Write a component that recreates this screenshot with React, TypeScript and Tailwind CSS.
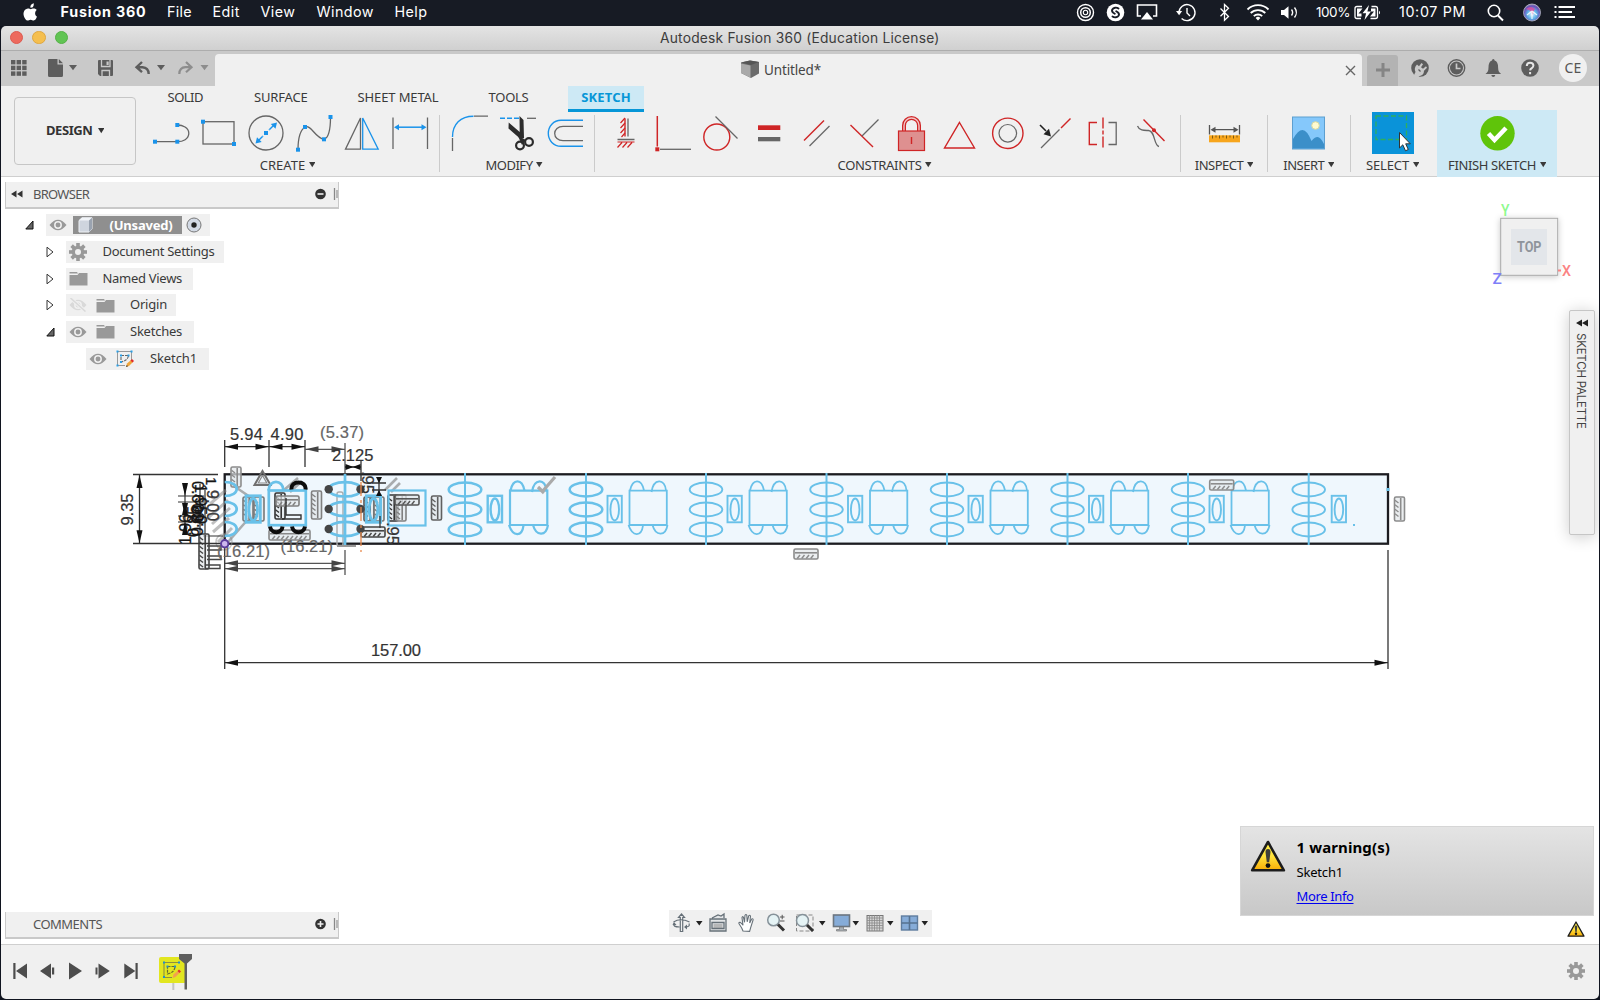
import React, { useLayoutEffect, useRef } from "react";

type Kids = { children?: React.ReactNode };

/* Text whose tracking is adjusted so that it takes exactly w pixels. */
function Fit({ w, className = "", children }: { w: number; className?: string; children: string }) {
  const ref = useRef<HTMLSpanElement>(null);
  useLayoutEffect(() => {
    const el = ref.current;
    if (!el) return;
    el.style.letterSpacing = "0px";
    const natural = el.getBoundingClientRect().width;
    el.style.letterSpacing = (w - natural) / children.length + "px";
  }, [w, children]);
  return (
    <span ref={ref} className={"inline-block shrink-0 whitespace-pre " + className}>
      {children}
    </span>
  );
}

/* A drawing that shows the part x..x+w, y..y+h of the window's coordinate space. */
function Art({ x, y, w, h, className = "", children }: { x: number; y: number; w: number; h: number; className?: string } & Kids) {
  return (
    <svg className={"block shrink-0 " + className} width={w} height={h} viewBox={`${x} ${y} ${w} ${h}`} fill="none">
      {children}
    </svg>
  );
}

const G = "#666";
const B = "#1a93ea";
const R = "#cf2526";

function Dot({ x, y, c = B }: { x: number; y: number; c?: string }) {
  return <rect x={x - 2} y={y - 2} width={4} height={4} fill={c} />;
}

function Caret({ className = "" }: { className?: string }) {
  return (
    <svg className={"block shrink-0 " + className} width="6.5" height="5.5" viewBox="0 0 7 6">
      <path d="M0 0H7L3.5 5.6Z" fill="currentColor" />
    </svg>
  );
}

/* ---------- macOS menu bar ---------- */

function MenuBar() {
  return (
    <div className="flex h-[26px] items-center bg-[#171b24] pb-[2px] font-['Inter',sans-serif] text-[14.3px] text-white">
      <Art x={18} y={0} w={42.5} h={25} className="ml-[18px]">
        <path d="M36.6 13.2c0-2 1.3-3 1.7-3.3-1-1.4-2.4-1.6-3-1.6-1.300-.1-2.400.7-3 .7-.7 0-1.700-.7-2.700-.7-3 .1-5.600 3.300-4.100 8 .8 2.200 2 4 3.500 4 1.200 0 1.700-.8 3.100-.8s1.900.8 3.100.8c1.600 0 2.800-2.300 3.300-4-.9-.4-1.900-1.500-1.900-3.100zM34.300 7c.9-1.100 1-2.500 1-4-1.700.2-3.600 1.700-3.500 4.400.9.100 1.900-.1 2.500-.4z" transform="translate(-1.500 .2)" fill="#fff" />
      </Art>
      <Fit w={86} className="font-bold">Fusion 360</Fit>
      <Fit w={25} className="ml-[20.5px]">File</Fit>
      <Fit w={27.5} className="ml-[20.5px]">Edit</Fit>
      <Fit w={35} className="ml-[20.5px]">View</Fit>
      <Fit w={57.5} className="ml-[21px]">Window</Fit>
      <Fit w={33} className="ml-[20.5px]">Help</Fit>
      <div className="ml-auto flex items-center">
        <Art x={1071} y={0} w={244} h={25}>
          <circle cx="1085.5" cy="12.5" r="8" stroke="#fff" strokeWidth="1.4" />
          <circle cx="1085.5" cy="12.5" r="4.800" stroke="#fff" strokeWidth="1.5" />
          <circle cx="1085.5" cy="12.5" r="2.200" stroke="#fff" strokeWidth="1.100" />
          <circle cx="1115.5" cy="12.5" r="8.800" fill="#fff" />
          <path d="M1118.500 8.500c-2-1.500-5-1-6.200 1-.8 1.500 0 2.500 1 3.300l1.500 1M1112.500 16.500c2 1.500 5 1 6.200-1 .8-1.500 0-2.500-1-3.300l-1.500-1" stroke="#171b24" strokeWidth="1.900" strokeLinecap="round" />
          <path d="M1141 16h-3.500V5h19v11h-3.500" stroke="#fff" strokeWidth="1.6" />
          <path d="M1147 12l6 7.500h-12z" fill="#fff" />
          <path d="M1179 12.500a8 8 0 1 1 2.600 6" stroke="#fff" strokeWidth="1.4" />
          <path d="M1176 11h6.200l-3.100 4.200z" fill="#fff" />
          <path d="M1187 8v5l3 3" stroke="#fff" strokeWidth="1.4" />
          <path d="M1220.500 8.500l8 8-4 3.800V4.500l4 3.800-8 8" stroke="#fff" strokeWidth="1.3" />
          <path d="M1247.500 9.500a15 15 0 0 1 21 0M1250.700 13a10.500 10.500 0 0 1 14.600 0M1253.800 16.200a6 6 0 0 1 8.400 0" stroke="#fff" strokeWidth="1.8" />
          <path d="M1258 20.500l-2.400-2.600a3.500 3.500 0 0 1 4.800 0z" fill="#fff" />
          <path d="M1281 10h3l4.500-3.800v12.600L1284 15h-3z" fill="#fff" />
          <path d="M1291.500 9.500a5 5 0 0 1 0 6M1294.500 7.500a8 8 0 0 1 0 10" stroke="#fff" strokeWidth="1.4" />
        </Art>
        <Fit w={34} className="ml-[1px] text-[13.5px]">100%</Fit>
        <Art x={1350} y={0} w={49} h={25}>
          <path d="M1362 6.500h-5a2 2 0 0 0-2 2v8a2 2 0 0 0 2 2h4M1371.500 6.500h4a2 2 0 0 1 2 2v8a2 2 0 0 1-2 2h-5" stroke="#fff" strokeWidth="1.3" />
          <path d="M1357 8.500h5.500l-4 5h3v3h-4.500zM1375.500 16.500h-5.500l4-5h-3v-3h4.500z" fill="#fff" />
          <path d="M1369 5l-6.500 8.200h3.600l-1.600 6.800 6.500-8.400h-3.600z" fill="#fff" />
          <path d="M1379 10.700v3.600c1.300-.4 1.300-3.200 0-3.600z" fill="#fff" />
        </Art>
        <Fit w={67}>10:07 PM</Fit>
        <Art x={1466} y={0} w={134} h={25}>
          <circle cx="1494" cy="11" r="5.700" stroke="#fff" strokeWidth="1.6" />
          <path d="M1498 15.500l5 5" stroke="#fff" strokeWidth="1.900" />
          <defs>
            <radialGradient id="siri" cx=".5" cy=".6" r=".6">
              <stop offset="0" stopColor="#e9f4ff" /><stop offset=".45" stopColor="#5fb4e8" /><stop offset=".8" stopColor="#6a4fb8" /><stop offset="1" stopColor="#8d8aa8" />
            </radialGradient>
          </defs>
          <circle cx="1532" cy="12.5" r="8.500" fill="url(#siri)" stroke="#b9bccb" strokeWidth=".8" />
          <path d="M1526 9q5-4 9 0q-2 2-2 6q-2-5-7-6z" fill="#e0479a" opacity=".8" />
          <path d="M1532 11l-5 4M1532 11l0 8M1532 11l5 4" stroke="#fff" strokeWidth="1.2" opacity=".85" />
          <path d="M1554.500 7h2M1554.500 12h2M1554.500 17h2M1558.500 7h16.500M1558.500 12h13.500M1558.500 17h16.500" stroke="#fff" strokeWidth="2.200" />
        </Art>
      </div>
    </div>
  );
}

function TitleBar() {
  return (
    <div className="relative flex h-[25px] items-center justify-center rounded-t-[5px] border-b border-[#adadad] bg-gradient-to-b from-[#e4e4e4] to-[#d0d0d0] pt-px font-['Inter',sans-serif] text-[13.8px] text-[#3c3c3c]">
      <div className="absolute left-[9px] top-[5px] flex gap-[9px]">
        <i className="size-[13.4px] rounded-full border border-[#dd5a50] bg-[#ed6a5e]" />
        <i className="size-[13.4px] rounded-full border border-[#dfa740] bg-[#f5bf4f]" />
        <i className="size-[13.4px] rounded-full border border-[#55b147] bg-[#61c454]" />
      </div>
      <Fit w={279.5}>Autodesk Fusion 360 (Education License)</Fit>
    </div>
  );
}

/* ---------- application tab row ---------- */

function DocumentTabs() {
  return (
    <div className="flex h-[35px] items-end bg-[#c9c9c9]">
      <Art x={1} y={54} w={214} h={32}>
        {[0, 1, 2].map((r) => [0, 1, 2].map((c) => (
          <rect key={r + "-" + c} x={11 + c * 5.6} y={60 + r * 5.7} width="4.4" height="4.4" fill="#5d5d5d" />
        )))}
        <path d="M49 59h8.500v5.500h5.500V75.500a1.500 1.500 0 0 1-1.500 1.500H49.500a1.500 1.500 0 0 1-1.500-1.500V60a1 1 0 0 1 1-1zM58.800 59l4.200 4.200h-4.200z" fill="#5d5d5d" />
        <path d="M69 65h8l-4 5.300z" fill="#5d5d5d" />
        <path d="M98 61a1 1 0 0 1 1-1h13a1 1 0 0 1 1 1v14a1 1 0 0 1-1 1h-12l-2-2z" fill="#5d5d5d" />
        <path d="M101.500 60v6.500h8.500V60M102 76v-5.500h7.500V76" stroke="#c9c9c9" strokeWidth="1.3" />
        <path d="M106.500 61.500h2.200v3.500h-2.200z" fill="#c9c9c9" />
        <path d="M142 62l-5.500 5.200 5.500 5M137 67.200h5.500q6 .3 6.200 6.800" stroke="#5d5d5d" strokeWidth="2.4" />
        <path d="M157 65h8l-4 5.300z" fill="#5d5d5d" />
        <path d="M186 62l5.500 5.200-5.500 5M191 67.200h-5.500q-6 .3-6.200 6.800" stroke="#8d8d8d" strokeWidth="2.200" />
        <path d="M200.500 65h8l-4 5.300z" fill="#8d8d8d" />
      </Art>
      <div className="flex h-[32px] w-[1147px] items-center rounded-t-[4px] bg-[#f0f0f0] pl-[524px] font-['Noto_Sans',sans-serif] text-[13.5px] text-[#444]">
        <Art x={739} y={60} w={25} h={22}>
          <path d="M741 63.500l9-2 9 1.500v11.500l-8 4.500-10-5z" fill="#6b6b6b" />
          <path d="M741 64.500l9.500 2v12.200L741 74z" fill="#a9a9a9" />
          <path d="M741 63.500l9-2 9 1.500-8 3z" fill="#555" />
        </Art>
        <Fit w={57}>Untitled*</Fit>
        <Art x={1344} y={64} w={13} h={13} className="ml-auto mr-[5.5px]">
          <path d="M1346 66l9 9M1355 66l-9 9" stroke="#666" strokeWidth="1.4" />
        </Art>
      </div>
      <div className="ml-[5px] flex h-[31px] w-[31px] items-center justify-center rounded-t-[3px] bg-[#b3b3b3] pb-[2px]">
        <Art x={1375} y={62} w={16} h={16}>
          <path d="M1376 70h14M1383 63v14" stroke="#858585" strokeWidth="3" />
        </Art>
      </div>
      <Art x={1398} y={54} w={161} h={32}>
        <circle cx="1420" cy="68" r="8.800" fill="#5d5d5d" />
        <path d="M1413 77l2.500-5q-2-4 1.500-7.500l2 1.800 2.500-3.300 1.500 1.300-2 3 2 1.500 3-2.500 1 1.500-3 3q0 4.500-5 5.500l-1.500 3z" fill="#c9c9c9" />
        <path d="M1418.500 69.500l2 2" stroke="#5d5d5d" strokeWidth="1.2" />
        <circle cx="1456.5" cy="68" r="8.200" stroke="#5d5d5d" strokeWidth="1.4" />
        <circle cx="1456.5" cy="68" r="6.500" fill="#5d5d5d" />
        <path d="M1456.500 63.500v5h4" stroke="#c9c9c9" strokeWidth="1.7" />
        <path d="M1485.500 74q3-2 3-6.500 0-6 3.500-7 0-1.500 1.300-1.500t1.300 1.500q3.500 1 3.500 7 0 4.500 3 6.500zM1491.300 75h4q-.3 2-2 2t-2-2z" fill="#5d5d5d" />
        <circle cx="1530" cy="68" r="8.800" fill="#5d5d5d" />
        <path d="M1526.800 66q0-3.300 3.300-3.300t3.300 2.900q0 1.500-1.600 2.500t-1.700 2.200M1530.100 72v2.200" stroke="#e6e6e6" strokeWidth="2" />
      </Art>
      <div className="mb-[4.5px] flex size-[28px] items-center justify-center rounded-full bg-[#f0f0f0] font-['Noto_Sans',sans-serif] text-[14px] text-[#555]">
        <Fit w={17}>CE</Fit>
      </div>
    </div>
  );
}

/* ---------- ribbon ---------- */

function Group({ label, w, labelW, children, row = "", caption = "" }: { label: string; w: number; labelW: number; row?: string; caption?: string } & Kids) {
  const width = { width: w };
  return (
    <div className="flex h-[67px] shrink-0 flex-col items-center" style={width}>
      <div className={"flex h-[44px] shrink-0 justify-center pt-[2px] " + row}>{children}</div>
      <div className={"flex h-[22px] items-center gap-[3.5px] leading-[22px] " + caption}>
        <Fit w={labelW}>{label}</Fit>
        <Caret />
      </div>
    </div>
  );
}

function Sep() {
  return <div className="mt-[5px] h-[57px] w-px shrink-0 bg-[#cbcbcb]" />;
}

const Icon = ({ x, w = 48, children }: { x: number; w?: number } & Kids) => (
  <Art x={x} y={112} w={w} h={42}>{children}</Art>
);

function CreateIcons() {
  return (
    <>
      <Icon x={148}>
        <path d="M155 141.700H177.500M177.500 125c5 0 11.300 2.500 11.300 8.300s-6 8.400-11.300 8.400" stroke={G} strokeWidth="1.3" />
        <Dot x={155} y={141.7} /><Dot x={177.3} y={141.7} /><Dot x={177.3} y={125} />
      </Icon>
      <Icon x={196} w={46}>
        <rect x="203" y="121.7" width="31" height="22.3" stroke={G} strokeWidth="1.3" />
        <Dot x={203} y={121.7} /><Dot x={234} y={144} />
      </Icon>
      <Icon x={242}>
        <circle cx="266" cy="133" r="17" stroke={G} strokeWidth="1.3" />
        <path d="M258.500 140.500L273.500 125.500" stroke={B} strokeWidth="1.4" />
        <path d="M277 122.500l-1.500 6.200-4.700-4.700zM255.500 143.500l1.500-6.200 4.700 4.700z" fill={B} />
        <rect x="262.5" y="129.5" width="7" height="7" fill="#f0f0f0" />
        <Dot x={266} y={133} />
      </Icon>
      <Icon x={290}>
        <path d="M298 149.700c0-10 1.500-19 7-22.700 6-3 10 11 19 12.300 5-1.500 6.500-12 6.500-22.300" stroke={G} strokeWidth="1.3" />
        <Dot x={298} y={149.7} /><Dot x={305} y={127} /><Dot x={324} y={139.3} /><Dot x={330.5} y={117} />
      </Icon>
      <Icon x={338}>
        <path d="M360.500 118v31.200h-15z" stroke={G} strokeWidth="1.3" />
        <path d="M362.700 118v31.200h15.500z" stroke={B} strokeWidth="1.3" />
      </Icon>
      <Icon x={386}>
        <path d="M393 117.500v31.500M427.500 117.500v31.500" stroke={G} strokeWidth="1.3" />
        <path d="M396 127.200h28" stroke={B} strokeWidth="1.5" />
        <path d="M394 127.200l5-3v6zM426.500 127.200l-5-3v6z" fill={B} />
      </Icon>
    </>
  );
}

function ModifyIcons() {
  return (
    <>
      <Icon x={446}>
        <path d="M452.500 151v-13M474 116.200h14" stroke={G} strokeWidth="1.3" />
        <path d="M452.500 137c0-13 8-20.800 21-20.800" stroke={B} strokeWidth="1.4" />
      </Icon>
      <Icon x={494}>
        <path d="M500 118.300h19" stroke={B} strokeWidth="1.4" strokeDasharray="5 2" />
        <path d="M527 118.300h9" stroke={G} strokeWidth="1.3" />
        <path d="M519.500 116l4 4 .5 18-3.500 1-12-10.500.2-6 11 9.500z" fill="#2c2c2c" />
        <circle cx="520" cy="145.5" r="3.900" stroke="#2c2c2c" strokeWidth="2.200" />
        <circle cx="529" cy="142" r="3.900" stroke="#2c2c2c" strokeWidth="2.200" />
        <path d="M518 136l8 4-4 5z" fill="#2c2c2c" />
      </Icon>
      <Icon x={542} w={47}>
        <path d="M583 120.300h-22c-7.500 0-12.700 6-12.700 13s5.200 13 12.700 13h22" stroke={B} strokeWidth="1.4" />
        <path d="M583 126.300h-20c-5 0-8.300 3.200-8.300 7.200s3.300 7.200 8.300 7.200h20" stroke={G} strokeWidth="1.3" />
      </Icon>
    </>
  );
}

function ConstraintIcons() {
  return (
    <>
      <Icon x={602} w={47}>
        <path d="M625 118.500v18" stroke={R} strokeWidth="1.4" />
        <path d="M628 118.500v18M617.500 139.500h17" stroke={G} strokeWidth="1.3" />
        <path d="M617.500 142h17M625 118l-4.500 5M625 123l-4.500 5M625 128l-4.500 5M625 133l-3.500 4M622 142.500l-4.500 5M627 142.500l-4.500 5M632 142.500l-4.500 5" stroke={R} strokeWidth="1.2" />
      </Icon>
      <Icon x={649}>
        <path d="M657.300 116v30.500" stroke={R} strokeWidth="1.5" />
        <path d="M660 149.300h31" stroke={G} strokeWidth="1.3" />
        <Dot x={657.3} y={149.3} c={R} />
      </Icon>
      <Icon x={697}>
        <circle cx="716.8" cy="137" r="13" stroke={R} strokeWidth="1.4" />
        <path d="M715.500 116.500l22 22" stroke={G} strokeWidth="1.3" />
      </Icon>
      <Icon x={745}>
        <path d="M758 125.300h22.300v4.700H758z" fill={R} />
        <path d="M758 137h22.300v4.300H758z" fill={G} />
      </Icon>
      <Icon x={793}>
        <path d="M804 140.500l20-20" stroke={R} strokeWidth="1.4" />
        <path d="M809.500 146l20-20" stroke={G} strokeWidth="1.3" />
      </Icon>
      <Icon x={841} w={47}>
        <path d="M850.500 125l22.500 22" stroke={R} strokeWidth="1.4" />
        <path d="M862 136l16.500-16.500" stroke={G} strokeWidth="1.3" />
      </Icon>
      <Icon x={888}>
        <path d="M904 131v-5.500a7.500 7.500 0 0 1 15 0v5.500" stroke={R} strokeWidth="4" />
        <path d="M904 131v-5.500a7.500 7.500 0 0 1 15 0v5.500" stroke="#f3c6c6" strokeWidth="1.4" />
        <rect x="898.5" y="131" width="26" height="19.5" fill="#de9090" stroke={R} strokeWidth="1.2" />
        <path d="M911.500 137v7" stroke={R} strokeWidth="1.4" />
      </Icon>
      <Icon x={936}>
        <path d="M959.500 122.500l15 25.500h-30z" stroke={R} strokeWidth="1.4" />
      </Icon>
      <Icon x={984}>
        <circle cx="1007.8" cy="133.3" r="15.2" stroke={R} strokeWidth="1.4" />
        <circle cx="1007.8" cy="133.3" r="8.800" stroke={G} strokeWidth="1.2" />
      </Icon>
      <Icon x={1032}>
        <path d="M1041 148l18.500-18.500" stroke={G} strokeWidth="1.3" />
        <path d="M1061 128l9.500-9.500" stroke={R} strokeWidth="1.5" />
        <path d="M1040 125l6 6" stroke="#222" strokeWidth="1.6" />
        <path d="M1051 136.500l-7.500-2.200 5.500-5.500z" fill="#222" />
      </Icon>
      <Icon x={1080}>
        <path d="M1097 122.500h-7.700v22h7.700" stroke={R} strokeWidth="1.4" />
        <path d="M1108.500 122.500h7.700v22h-7.700" stroke={G} strokeWidth="1.3" />
        <path d="M1103 117.500v31.500" stroke={R} strokeWidth="1.4" strokeDasharray="11 2 4 2" />
      </Icon>
      <Icon x={1128} w={46}>
        <path d="M1137.500 126c2 5 7 4.500 11 4.500 7 .5 5 15 10.500 16" stroke={G} strokeWidth="1.3" />
        <path d="M1143.500 119.500l21 21.500" stroke={R} strokeWidth="1.4" />
        <circle cx="1154" cy="130.3" r="2" fill={R} />
      </Icon>
    </>
  );
}

function Ribbon() {
  return (
    <div className="flex h-[91px] shrink-0 border-b border-[#cfcfcf] bg-[#f0f0f0] font-['Noto_Sans',sans-serif] text-[13px] text-[#3a3a3a]">
      <div className="ml-[13px] mt-[11px] flex h-[67.5px] w-[122px] items-center justify-center gap-[5px] rounded-[4px] border border-[#c6c6c6] text-[13px] font-bold text-[#333]">
        <Fit w={46.5}>DESIGN</Fit>
        <Caret />
      </div>
      <div className="flex w-[1461px] flex-col">
        <div className="flex h-[24px] shrink-0 items-center pl-[31.5px]">
          <Fit w={35.5}>SOLID</Fit>
          <Fit w={53.5} className="ml-[51px]">SURFACE</Fit>
          <Fit w={81} className="ml-[50px]">SHEET METAL</Fit>
          <Fit w={40} className="ml-[50px]">TOOLS</Fit>
          <div className="ml-[39.5px] mt-[1px] flex h-[26px] w-[76px] shrink-0 items-center justify-center border-b-[3px] border-[#0696d7] bg-[#cde9f5] pt-[2px] font-bold text-[#0696d7]">
            <Fit w={49.5}>SKETCH</Fit>
          </div>
        </div>
        <div className="flex h-[67px]">
          <Group label="CREATE" w={303} labelW={45.5} row="pl-[7px]"><CreateIcons /></Group>
          <Sep />
          <Group label="MODIFY" w={154} labelW={47} caption="pr-[6px]"><ModifyIcons /></Group>
          <Sep />
          <Group label="CONSTRAINTS" w={585} labelW={84} caption="pr-[6px]"><ConstraintIcons /></Group>
          <Sep />
          <Group label="INSPECT" w={86} labelW={48.5}>
            <Icon x={1205} w={38}>
              <path d="M1209.500 125v9.500M1239.500 125v9.500M1212 129.700h25" stroke="#555" strokeWidth="1.3" />
              <path d="M1210.500 129.700l5-3v6zM1238.500 129.700l-5-3v6z" fill="#555" />
              <rect x="1209" y="135.3" width="31" height="7" fill="#f7a51c" />
              <path d="M1212.500 135.500v3M1216 135.500v2M1219.500 135.500v3M1223 135.500v2M1226.500 135.500v3M1230 135.500v2M1233.500 135.500v3M1237 135.500v2" stroke="#7d5a10" strokeWidth="1" />
            </Icon>
          </Group>
          <Sep />
          <Group label="INSERT" w={81.5} labelW={41}>
            <Icon x={1290} w={39}>
              <rect x="1293.5" y="117" width="32" height="32" fill="#85c8fb" stroke="#5d9fd0" />
              <path d="M1294 139q5-9 9.500-9t9 11q3-4 6-4t6.500 7v4.500h-31z" fill="#3b8fc9" />
              <circle cx="1316.5" cy="125.5" r="3.800" fill="#fffbd0" stroke="#d8d8a0" />
            </Icon>
          </Group>
          <Sep />
          <Group label="SELECT" w={84} labelW={43}>
            <Icon x={1371} w={42}>
              <rect x="1371" y="112" width="42" height="42" fill="#0a93d9" />
              <rect x="1375" y="116" width="30.5" height="23.5" stroke="#2fae5e" strokeWidth="1.3" strokeDasharray="5 2.5" />
              <path d="M1398.500 132.500v15.500l3.300-3.200 2.700 6 2.800-1.300-2.600-5.700h4.600z" fill="#fff" stroke="#333" strokeWidth="1" />
            </Icon>
          </Group>
          <div className="ml-[2.5px] h-[67px] bg-[#cde9f5]">
            <Group label="FINISH SKETCH" w={120} labelW={88}>
              <Icon x={1476} w={41}>
                <circle cx="1496.5" cy="133.3" r="17.2" fill="#5fc40a" />
                <path d="M1487.500 133.500l6 6.500 11.500-12" stroke="#fff" strokeWidth="4.5" />
              </Icon>
            </Group>
          </div>
        </div>
      </div>
    </div>
  );
}

/* ---------- sketch geometry ---------- */

const SK = "#69c1e9";

function Arrow({ x, y, dir, c = "#111" }: { x: number; y: number; dir: "l" | "r" | "u" | "d"; c?: string }) {
  const rot = { l: 0, u: 90, r: 180, d: 270 }[dir];
  return <path d="M0 0L13 -3V3Z" transform={`translate(${x} ${y}) rotate(${rot})`} fill={c} />;
}

/* Horizontal / vertical constraint glyph: a bar with short teeth below it. */
function Hatch({ x, y, vertical = false, c = "#8c8c8c", len = 24 }: { x: number; y: number; vertical?: boolean; c?: string; len?: number }) {
  const n = Math.floor((len - 3) / 4.5);
  return (
    <g transform={`translate(${x} ${y})` + (vertical ? " rotate(90)" : "")} stroke={c}>
      <rect width={len} height="10" rx="1.5" fill="#e3e7ea" fillOpacity=".7" strokeWidth="1.6" />
      <path d={`M1 3.800H${len - 1}`} strokeWidth="1.6" />
      {Array.from({ length: n }, (_, i) => (
        <path key={i} d={`M${6 + i * 4.5} 6l-2.800 3.500`} strokeWidth="1.400" />
      ))}
    </g>
  );
}

function Coil({ x, thick }: { x: number; thick?: boolean }) {
  const sw = thick ? 2.5 : 1.9;
  return (
    <g stroke={SK} strokeWidth={sw}>
      {[489.5, 509.5, 529.5].map((y) => <ellipse key={y} cx={x} cy={y} rx="16.3" ry="7" />)}
      <path d={`M${x} 473V545`} strokeWidth="2" />
    </g>
  );
}

function SmallPart({ x, sw = 1.9 }: { x: number; sw?: number }) {
  return (
    <g stroke={SK} strokeWidth={sw}>
      <rect x={x} y="495.8" width="14.3" height="26.5" />
      <ellipse cx={x + 7.2} cy="509.5" rx="4.300" ry="11" />
    </g>
  );
}

function Chip({ x, sw = 1.8 }: { x: number; sw?: number }) {
  return (
    <g stroke={SK} strokeWidth={sw} transform={`translate(${x} 0)`}>
      <path d="M0 490.700H37.300V525H0Z" />
      <path d="M.5 490.500C3 478.500 12 478 14.500 490.500M22 492C24 478 35.500 478 36.500 490.500" />
      <path d="M-1 525C3 537 12 537 13.500 525.500M23 525C26 536 36 537 38 525" />
    </g>
  );
}

function Sketch() {
  const lines = [465, 586, 706, 826.5, 947, 1067.5, 1188, 1308.7];
  return (
    <Art x={1} y={177} w={1597} h={766}>
      <rect x="224.7" y="474.3" width="1163.3" height="69.4" fill="#eff7fd" stroke="#1c1c20" strokeWidth="2.3" />

      {lines.map((x, i) => (
        <g key={x}>
          <Coil x={x} thick={i < 2} />
          <SmallPart x={x + (i === 0 ? 22.7 : i === 7 ? 23 : 21.5)} sw={i === 0 ? 2.4 : 1.9} />
          {i < 7 && <Chip x={x + (i === 0 ? 45 : 43.5)} sw={i === 0 ? 2.2 : 1.8} />}
        </g>
      ))}
      <rect x="1353" y="524" width="2" height="2" fill={SK} />
      <rect x="1386.5" y="488" width="3" height="3" fill={SK} />
      <path d="M538 487l6 6M541.500 492.500L555 477" stroke="#aaa" strokeWidth="3.2" />

      <Hatch x={794} y={549} />
      <Hatch x={1209.7} y={480} />
      <Hatch x={1404.5} y={497} vertical />

      {/* detailed first cell */}
      <g stroke="#8b8b8b" strokeWidth="2">
        <path d="M231 484l22 15M228 542l22-25M284 490l14-12M290 492l12-11M385 490l12-12M391 492l9-9" strokeWidth="2.6" opacity=".7" />
        <path d="M262.500 471l-8 14h16z" stroke="#6f6f6f" strokeWidth="2" />
        <path d="M262.500 475.500l-4.200 7.500h8.500z" stroke="#8a8a8a" strokeWidth="1.2" fill="#eff7fd" />
        <path d="M226 490l-16 14M228 500l-20 18M230 508l-18 16M229 518l-16 14M232 528l-14 14" opacity=".55" strokeWidth="3" />
        <circle cx="224" cy="542" r="8" opacity=".5" strokeWidth="1.5" />
      </g>
      <Hatch x={241} y={467} vertical len={20} />
      <Hatch x={321.5} y={491} vertical len={28} c="#808080" />
      <Hatch x={441.5} y={496} vertical c="#606060" />
      <Hatch x={269} y={530} len={41} c="#888" />
      <Hatch x={253} y={497} vertical c="#777" />
      <Hatch x={264} y={497} vertical c="#777" />
      <Hatch x={285} y={493} vertical len={26} c="#333" />
      <Hatch x={276} y={496} len={23} c="#808080" />
      <rect x="337" y="492" width="6" height="54" rx="2" stroke="#aaa" strokeWidth="1.4" />
      <Hatch x={374} y={497} vertical c="#555" />
      <Hatch x={384} y={497} vertical c="#777" />
      <Hatch x={398} y={495} vertical len={26} c="#333" />
      <Hatch x={406} y={495} vertical len={26} c="#808080" />
      <Hatch x={395} y={495} len={24} c="#555" />
      <Hatch x={361} y={527} len={24} c="#444" />
      <path d="M286 498v17h15v4h-19" stroke="#333" strokeWidth="1.4" />

      <g stroke={SK} strokeWidth="2.7">
        <path d="M224.700 482c16 0 16 14 0 14M224.700 502c16 0 16 14 0 14M224.700 522c16 0 16 14 0 14" />
        {[489.3, 509, 529].map((y) => <ellipse key={y} cx="345" cy={y} rx="16.5" ry="7.2" />)}
        <path d="M345 474V545" />
        <path d="M268.500 490.500C269 479 283 479 283.500 490.500" />
        <rect x="268.8" y="490.5" width="37" height="34.7" />
        <rect x="388.5" y="490.5" width="37" height="35" strokeWidth="2.2" />
      </g>
      <SmallPart x={246} sw={2.8} />
      <SmallPart x={366.3} sw={2.8} />
      <path d="M291.500 489.500C290 480 307 480 305.500 489.500M270 526.500C271 534 282 534 282.500 526.500M292 526.500C293 534 304 534 305 526.500" stroke="#0c0c0c" strokeWidth="4" />
      {[489.3, 509, 529].map((y) => (
        <g key={y} fill="#454545"><circle cx="328.7" cy={y} r="4.2" /><circle cx="360.5" cy={y} r="4.2" /></g>
      ))}
      <path d="M361 482V552" stroke="#e88a4e" strokeWidth="1.3" strokeDasharray="14 4 3 4" />

      {/* crowded dimensions at the left end */}
      <g stroke="#333" strokeWidth="1.2">
        <path d="M178 496h26M178 502h26M178 516h26M178 522h26M185 488v42M200 484v60M205 490v50M203 536h20" />
      </g>
      <Hatch x={209} y={534} vertical len={35} c="#444" />
      <path d="M207 546h14v4h-14M207 556h14v3.500h-14M205 565h15v3.500h-15" stroke="#444" strokeWidth="1.4" />
      <Arrow x={185} y={496} dir="d" /><Arrow x={185} y={502} dir="u" /><Arrow x={185} y={516} dir="d" /><Arrow x={185} y={522} dir="u" />
      <g fontFamily="Liberation Sans, sans-serif" fontSize="16" fill="#161616" stroke="#161616" strokeWidth=".3">
        <text transform="translate(206 477) rotate(90)" fontSize="15">1</text>
        <text transform="translate(192 481) rotate(90)">0.600</text>
        <text transform="translate(195 484) rotate(90)">1.950</text>
        <text transform="translate(207 490) rotate(90)" fill="#444">9.00</text>
        <text transform="translate(203 536) rotate(-90)">0.80</text>
        <text transform="translate(191 545) rotate(-90)">1.96</text>
        <text transform="translate(199 537) rotate(-90)">0.85</text>
      </g>

      {/* dimensions */}
      <g stroke="#333" strokeWidth="1.3">
        <path d="M133 474.500H218M133 543.500H224M139.500 475V543" />
        <path d="M224.700 440V467M269 440V467M305 440V467M225 446.700H304.500" />
        <path d="M305 449.300H345M345 443V474" stroke="#555" />
        <path d="M345 467H361M361 461V481" />
        <path d="M379 477V492M372 483H386M372 490H386M380 516V528" />
        <path d="M225 563.300H345M225 568.700H345M345 550V575" stroke="#555" />
        <path d="M224.700 545V669M1388 550V669" />
        <path d="M225 662.700H1388" />
      </g>
      <Arrow x={139.5} y={475} dir="u" /><Arrow x={139.5} y={543.3} dir="d" />
      <Arrow x={225} y={446.7} dir="l" /><Arrow x={268.5} y={446.7} dir="r" />
      <Arrow x={269.5} y={446.7} dir="l" /><Arrow x={304.5} y={446.7} dir="r" />
      <Arrow x={305.5} y={449.3} dir="l" c="#444" /><Arrow x={344.5} y={449.3} dir="r" c="#444" />
      <path d="M345.500 464l8 3-8 3zM360.500 464l-8 3 8 3z" fill="#111" />
      <path d="M376 477h6l-3 6zM376 496h6l-3-6z" fill="#111" />
      <Arrow x={225} y={563.3} dir="l" c="#444" /><Arrow x={344.5} y={563.3} dir="r" c="#444" />
      <Arrow x={225} y={568.7} dir="l" c="#444" /><Arrow x={344.5} y={568.7} dir="r" c="#444" />
      <Arrow x={225} y={662.7} dir="l" /><Arrow x={1387.5} y={662.7} dir="r" />
      <g fontFamily="Liberation Sans, sans-serif" fontSize="16.5" fill="#333" stroke="#333" strokeWidth=".2">
        <text transform="translate(132.500 525.500) rotate(-90)" textLength="32">9.35</text>
        <text x="230" y="439.5" textLength="33">5.94</text>
        <text x="270.5" y="439.5" textLength="33">4.90</text>
        <text x="320" y="437.5" textLength="44" fill="#666" stroke="#666">(5.37)</text>
        <text x="332" y="460.5" textLength="41.5">2.125</text>
        <text x="217" y="556.5" textLength="53" fill="#666" stroke="#666">(16.21)</text>
        <text x="280.5" y="551.5" textLength="52.5" fill="#666" stroke="#666">(16.21)</text>
        <text x="371" y="656" textLength="50">157.00</text>
        <text transform="translate(362 471) rotate(90)">.95</text>
        <text transform="translate(387 522) rotate(90)">.95</text>
      </g>
      <circle cx="224.7" cy="543.7" r="3.700" fill="#cdb8ee" stroke="#5c3d9c" strokeWidth="2" />
      <path d="M337 546h19" stroke="#999" strokeWidth="2" />
    </Art>
  );
}

/* ---------- browser tree ---------- */

function PanelHeader({ title, w, open }: { title: string; w: number; open: boolean }) {
  return (
    <div className="flex h-[27.5px] w-[333.5px] items-center border-b-2 border-r border-l border-[#c9c9c9] bg-[#f0f0f0] font-['Noto_Sans',sans-serif] text-[13px] text-[#555]">
      <Art x={0} y={0} w={27} h={12}>
        {open && <path d="M5 6l5.500-3.500v7zM11 6l5.500-3.500v7z" fill="#333" />}
      </Art>
      <Fit w={w}>{title}</Fit>
      <Art x={0} y={0} w={24} h={14} className="ml-auto">
        <circle cx="6.5" cy="7" r="5.300" fill="#333" />
        <path d={open ? "M3.500 7h6" : "M3.500 7h6M6.500 4v6"} stroke="#eee" strokeWidth="1.6" />
        <path d="M20.500 1v12" stroke="#888" strokeWidth="1.3" /><path d="M23 3v8" stroke="#aaa" strokeWidth="1.6" />
      </Art>
    </div>
  );
}

function Eye({ off = false }: { off?: boolean }) {
  const c = off ? "#d9d9d9" : "#999";
  return (
    <svg className="shrink-0" width="18" height="14" viewBox="0 0 18 14" fill="none">
      <path d="M.5 7Q9-3.500 17.500 7Q9 17.500.5 7z" fill={c} />
      <circle cx="9" cy="7" r="3.200" stroke="#f0f0f0" strokeWidth="1.5" />
      {off && <path d="M1.500 0l15 13.500" stroke="#f0f0f0" strokeWidth="3.5" />}
      {off && <path d="M1.500 0l15 13.500" stroke={c} strokeWidth="1.5" />}
    </svg>
  );
}

function Folder() {
  return (
    <svg className="shrink-0" width="19" height="15" viewBox="0 0 19 15">
      <path d="M.5 1h7.500l1 1.500H.5zM.5 4h8l1.500-2h8.500v12.500H.5z" fill="#999" />
    </svg>
  );
}

function Gear() {
  return (
    <svg className="shrink-0" width="18" height="18" viewBox="-9 -9 18 18">
      {[0, 45, 90, 135].map((a) => <rect key={a} x="-1.8" y="-9" width="3.6" height="18" fill="#999" transform={`rotate(${a})`} />)}
      <circle r="6.300" fill="#999" /><circle r="3" fill="#f0f0f0" />
    </svg>
  );
}

function SketchGlyph() {
  return (
    <svg className="shrink-0" width="18" height="18" viewBox="0 0 18 18" fill="none">
      <path d="M1.500 1.500H15.500V10M1.500 1.500V15.500H9" stroke="#999" />
      <path d="M5 5.500h7.500q-.5 5-7.500 6.500z" stroke="#666" strokeWidth="1.100" strokeDasharray="3 1" />
      <path d="M.5.500h2v2h-2zM14.500.500h2v2h-2zM.5 14.500h2v2h-2zM4 4.500h2v2H4zM11.500 4.500h2v2h-2zM4 11h2v2H4z" fill="#29a0e8" />
      <path d="M10 17l1-3.500 4-3.500 2 2-4 4z" fill="#f0a63c" /><path d="M14.500 10.500l1.500-1.500 2 2-1.500 1.500z" fill="#e02b2b" /><path d="M10 17l.8-2 1.200 1.200z" fill="#333" />
    </svg>
  );
}

function Expander({ open }: { open: boolean }) {
  return (
    <svg className="shrink-0" width="9" height="12" viewBox="0 0 9 12">
      {open ? <path d="M8 2V10H.8z" fill="#666" stroke="#111" /> : <path d="M1 1.200V10.800L7 6z" fill="#fff" stroke="#333" />}
    </svg>
  );
}

function TreeRow({ indent, open, label, w, children, boxW, gap }: { indent: string; open?: boolean; label: string; w: number; boxW: number; gap: string } & Kids) {
  const width = { width: boxW };
  return (
    <div className={"flex h-[26.65px] items-center " + indent}>
      {open !== undefined && <Expander open={open} />}
      <div className={"flex h-[22px] items-center bg-[#f0f0f0] pl-[3px] " + (open !== undefined ? "ml-[11.500px]" : "")} style={width}>
        {children}
        <Fit w={w} className={gap}>{label}</Fit>
      </div>
    </div>
  );
}

function BrowserTree() {
  return (
    <div className="absolute left-[4px] top-[4.5px] font-['Noto_Sans',sans-serif] text-[13px] text-[#3a3a3a]">
      <PanelHeader title="BROWSER" w={56} open />
      <div className="pt-[3px]">
        <div className="flex h-[26.65px] items-center pl-[20px]">
          <Expander open />
          <div className="ml-[11.5px] flex h-[22px] w-[164px] items-center bg-[#f0f0f0] pl-[3px]">
            <Eye />
            <div className="ml-[6px] flex h-[18px] w-[109px] items-center bg-[#8f8f8f] pl-[5px] text-[13px] font-bold text-white">
              <svg width="15" height="16" viewBox="0 0 15 16">
                <path d="M1 3.500L4 .8H14V12L11 15H1z" fill="#cfd5de" stroke="#eef1f5" />
                <path d="M1 3.500L4 .8H14L11 3.500z" fill="#f1f4f8" /><path d="M11 3.500L14 .8V12L11 15z" fill="#9aa3b0" />
              </svg>
              <Fit w={63} className="ml-[17px]">(Unsaved)</Fit>
            </div>
            <svg className="ml-[4.5px]" width="16" height="16" viewBox="0 0 16 16">
              <circle cx="8" cy="8" r="7" fill="#d3dae5" stroke="#777" /><circle cx="8" cy="8" r="2.700" fill="#222" />
            </svg>
          </div>
        </div>
        <TreeRow indent="pl-[40.5px]" open={false} label="Document Settings" w={112} boxW={157.5} gap="ml-[15.5px]"><Gear /></TreeRow>
        <TreeRow indent="pl-[40.5px]" open={false} label="Named Views" w={79.5} boxW={126.5} gap="ml-[14.5px]"><Folder /></TreeRow>
        <TreeRow indent="pl-[40.5px]" open={false} label="Origin" w={37} boxW={110} gap="ml-[15px]"><Eye off /><span className="w-[9px]" /><Folder /></TreeRow>
        <TreeRow indent="pl-[40.5px]" open label="Sketches" w={52} boxW={127.5} gap="ml-[15px]"><Eye /><span className="w-[9px]" /><Folder /></TreeRow>
        <TreeRow indent="pl-[81px]" label="Sketch1" w={47} boxW={123} gap="ml-[16px]"><Eye /><span className="w-[9px]" /><SketchGlyph /></TreeRow>
      </div>
    </div>
  );
}

/* ---------- canvas overlays ---------- */

function Warn({ size }: { size: number }) {
  return (
    <svg className="shrink-0" width={size} height={size * 0.91} viewBox="0 0 36 33">
      <defs>
        <linearGradient id="warn" x2="0" y2="1"><stop offset="0" stopColor="#fff04a" /><stop offset=".5" stopColor="#ffe23c" /><stop offset="1" stopColor="#f9ad07" /></linearGradient>
      </defs>
      <path d="M18 2L34 30.500H2Z" fill="url(#warn)" stroke="#1c1c1c" strokeWidth="2.6" strokeLinejoin="round" />
      <path d="M15.500 12q0-3 2.500-3t2.500 3l-1.300 10.500h-2.400z" fill="#3f3f3a" /><circle cx="18" cy="25.8" r="2.400" fill="#111" />
    </svg>
  );
}

function WarningBox() {
  return (
    <div className="absolute left-[1239px] top-[649px] flex h-[90px] w-[354px] border border-[#d6d6d6] bg-gradient-to-b from-[#e4e4e4] to-[#c8c8c8] pl-[9px] pt-[13px] font-['Noto_Sans',sans-serif] text-black">
      <Warn size={36} />
      <div className="ml-[10.5px] flex flex-col items-start text-[13px]">
        <Fit w={93.5} className="-mt-[1px] text-[15px] font-bold leading-[16px]">1 warning(s)</Fit>
        <Fit w={46.5} className="mt-[7px] leading-[20px]">Sketch1</Fit>
        <Fit w={57} className="mt-[4px] leading-[20px] text-[#0000f0] underline underline-offset-2">More Info</Fit>
      </div>
    </div>
  );
}

function ViewCube() {
  return (
    <div className="absolute left-[1486px] top-[20px]">
      <svg width="100" height="95" viewBox="1487 197 100 95" fontFamily="Roboto, sans-serif">
        <defs><filter id="cubeShadow" x="-20%" y="-20%" width="150%" height="150%"><feDropShadow dx="0" dy="1" stdDeviation="3" floodOpacity=".22" /></filter></defs>
        <rect x="1500.7" y="218.3" width="57" height="57" fill="#f0f0f0" stroke="#a9a9a9" filter="url(#cubeShadow)" />
        <rect x="1511" y="229" width="36" height="36" fill="#e3e6ea" />
        <text x="1517" y="251.7" fontSize="14" fontWeight="700" fill="#8f949b" textLength="24.5" lengthAdjust="spacingAndGlyphs">TOP</text>
        <text x="1501" y="215.5" fontSize="16" fontWeight="500" fill="#8dfa8d" textLength="8.5" lengthAdjust="spacingAndGlyphs">Y</text>
        <text x="1492.5" y="283.5" fontSize="15.5" fontWeight="500" fill="#7f7ff8">Z</text>
        <text x="1562" y="276" fontSize="15.5" fontWeight="500" fill="#fb8383" textLength="9" lengthAdjust="spacingAndGlyphs">X</text>
        <path d="M1558 270.500h3" stroke="#fb8383" strokeWidth="2" />
      </svg>
    </div>
  );
}

function SketchPalette() {
  return (
    <div className="absolute left-[1568px] top-[133px] flex h-[225px] w-[26px] flex-col items-center rounded-[2px] border border-[#c6c6c6] bg-[#f0f0f0] pt-[8px] shadow-[0_2px_16px_rgba(0,0,0,0.2)]">
      <svg width="12" height="8" viewBox="0 0 12 8"><path d="M0 4L6 .5v7zM6 4L12 .5v7z" fill="#222" /></svg>
      <svg className="mt-[6px] block" width="14" height="97" viewBox="0 0 14 97">
        <text transform="translate(2.400 0) rotate(90)" textLength="96" fontFamily="Inter, sans-serif" fontSize="11.5" fill="#444">SKETCH PALETTE</text>
      </svg>
    </div>
  );
}

function NavBar() {
  const s = "#667078";
  return (
    <div className="absolute left-[668px] top-[733px] flex h-[27px] w-[263px] items-center bg-[#f0f0f0]">
      <Art x={669} y={910} w={263} h={27}>
        <path d="M681.500 914l3 3.500h-1.800v14h-2.400v-14h-1.800zM674 923.500q-1.500 3.500 5.500 3.500M689 923.500q1.500 3.500-4 3.500M673.500 922q7-4.500 16 0" stroke={s} strokeWidth="1.2" />
        <path d="M674 922l-1.500 3h4zM687 924.500l-3 2.500 3 2.500z" fill={s} />
        <path d="M710 919h16v12h-16zM712 922.500h12v6h-12zM712 918l6-3 3 1 3-2v4" stroke={s} strokeWidth="1.3" fill="#e3e5e7" />
        <path d="M713.500 925h9M713.500 927h9" stroke="#888" />
        <path d="M743 931q-1-3-3.500-6.500-1.500-2 .5-2.200 1.500.7 3 3l-1-7.500q.2-2 1.500-.5l1 5 .5-7q1-1.500 1.800 0l.4 6.500 1.500-6q1.300-1.300 1.800.3l-.8 7 2-4q1.500-.8 1.400.8l-2.500 8-1 3.500z" stroke={s} strokeWidth="1.100" fill="#fff" />
        <circle cx="773.5" cy="920" r="5.800" stroke="#86929a" strokeWidth="1.5" fill="#e5f3f5" />
        <path d="M778 924.500l6 6" stroke="#333" strokeWidth="3" /><path d="M780 917h4.500M782.200 914.800v4.500M780 921h4.500" stroke="#555" />
        <path d="M796.500 915h16.500v16H796.500z" stroke="#888" strokeDasharray="4 2" />
        <circle cx="802.5" cy="920.5" r="6" stroke="#86929a" strokeWidth="1.5" fill="#e5f3f5" />
        <path d="M807 925l6 6" stroke="#333" strokeWidth="3" />
        <rect x="833.5" y="915" width="16" height="11.5" fill="#86acd8" stroke="#6c7680" strokeWidth="1.6" />
        <path d="M839.500 927h4v2.500h3v1.500h-10v-1.500h3z" fill="#a9b0b6" stroke="#777" strokeWidth=".7" />
        <rect x="867" y="915.5" width="16" height="15.5" fill="#d5d5d5" stroke="#777" />
        <path d="M869.500 915v16M872 915v16M874.500 915v16M877 915v16M879.500 915v16M867 918h16M867 920.500h16M867 923h16M867 925.500h16M867 928h16" stroke="#8a8a8a" strokeWidth=".8" />
        <rect x="901.5" y="916" width="16" height="14" fill="#86acd8" stroke="#5f7d9f" strokeWidth="1.4" /><path d="M909.500 916v14M901.500 923h16" stroke="#55718f" strokeWidth="1.6" />
        <path d="M696 921h6.500l-3.200 4.500zM819 921h6.500l-3.200 4.500zM852.500 921h6.500l-3.200 4.500zM887 921h6.500l-3.200 4.500zM921.500 921h6.500l-3.200 4.500z" fill="#222" />
      </Art>
    </div>
  );
}

function Timeline() {
  const k = "#4d4d4d";
  return (
    <div className="flex h-[55px] items-start justify-between rounded-b-[5px] border-t border-[#cfcfcf] bg-[#f0f0f0] pr-[13.5px]">
      <Art x={1} y={945} w={220} h={52}>
        <path d="M13.300 963h2.200v16h-2.200zM27 963.500v15L16 971z" fill={k} />
        <path d="M51 963.500v15L40 971zM52 967.500h2.200v7H52z" fill={k} />
        <path d="M69 962.500v17L82 971z" fill={k} />
        <path d="M95.500 967.500h2v7h-2zM98.500 963.500v15l11.300-7.500z" fill={k} />
        <path d="M124.300 963.500v15l11-7.500zM135.500 963h2.200v16h-2.200z" fill={k} />
        <rect x="159" y="957" width="27" height="26" rx="2" fill="#e2e620" />
        <path d="M173.300 983v7" stroke="#c4c4c4" strokeWidth="2" />
        <path d="M164 962.500h15.500M164 962.500v15h8" stroke="#8c8f40" strokeWidth="1.100" />
        <path d="M167.500 966.500h7.500q-.5 6-7.500 7.500z" stroke="#66692d" strokeWidth="1.2" strokeDasharray="3 1" />
        <path d="M163 961.500h2v2h-2zM178 961.500h2v2h-2zM163 976h2v2h-2zM166.500 965.500h2v2h-2zM174 965.500h2v2h-2z" fill="#1f8fd0" />
        <path d="M172.500 978l1-3.500 4-3.500 2 2-4 4z" fill="#f3a04f" /><path d="M177.500 971l1.500-1.500 2 2-1.500 1.500z" fill="#e02b2b" />
        <path d="M179 954h13v5l-5 4.500v26h-2.500v-26l-5.500-4.500z" fill="#5f5f5f" />
      </Art>
      <div className="mt-[17px]"><Gear /></div>
    </div>
  );
}

export default function App() {
  return (
    <div className="h-[1000px] w-[1600px] overflow-hidden bg-[#10141f]">
      <MenuBar />
      <div className="ml-px flex w-[1597.5px] flex-col rounded-b-[5px]">
        <TitleBar />
        <DocumentTabs />
        <Ribbon />
        <div className="relative h-[767px] shrink-0 overflow-hidden bg-white">
          <Sketch />
          <BrowserTree />
          <ViewCube />
          <SketchPalette />
          <WarningBox />
          <div className="absolute left-[4px] top-[734.5px]">
            <PanelHeader title="COMMENTS" w={69} open={false} />
          </div>
          <NavBar />
          <div className="absolute left-[1565.5px] top-[744px]"><Warn size={18} /></div>
        </div>
        <Timeline />
      </div>
    </div>
  );
}
